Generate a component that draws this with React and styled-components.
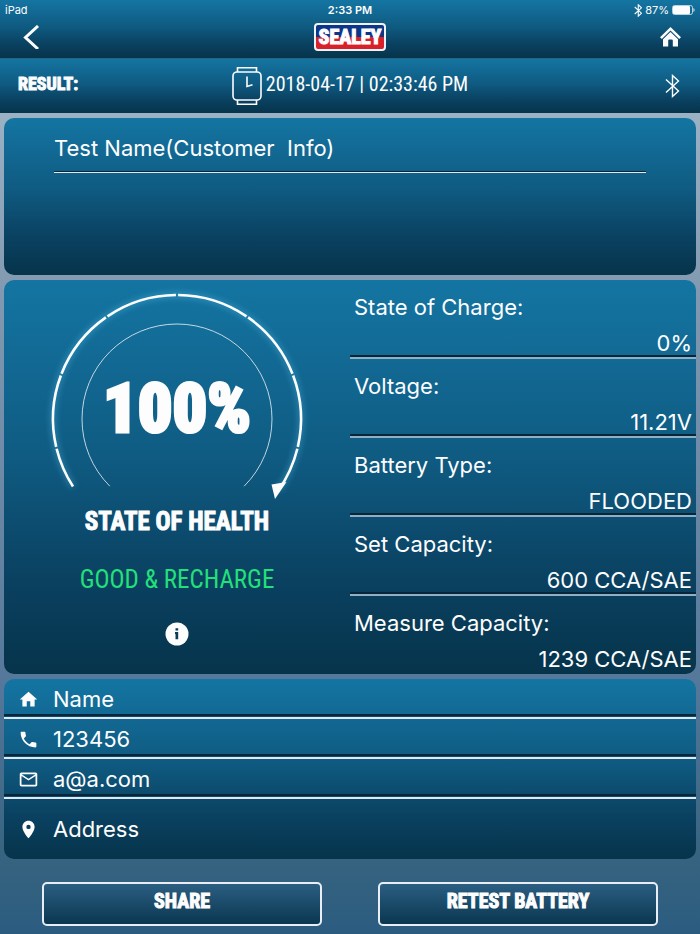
import styled, { createGlobalStyle } from 'styled-components'
import { MdHome, MdPhone, MdMailOutline, MdPlace } from 'react-icons/md'

const GlobalStyle = createGlobalStyle`
  * {
    box-sizing: border-box;
  }

  :root {
    --color-white: #fdfdfe;
    --color-dark-line: #08263a;
    --color-good: #22e07a;
    --panel-gradient: linear-gradient(#1475a2, #0f5b82 45%, #0a4161 76%, #06344b);
    --font-body: Inter, 'Liberation Sans', sans-serif;
    --font-condensed: 'Liberation Sans Narrow', 'Roboto Condensed', 'Open Sans Condensed', 'Liberation Sans', sans-serif;
  }

  body {
    margin: 0;
    color: var(--color-white);
    font-family: var(--font-body);
  }
`

const Page = styled.div`
  display: flex;
  flex-direction: column;
  min-height: 100vh;
  background: linear-gradient(#9bb1c4 12%, #8199b0 32%, #54779a 74%, #36637f 92%, #2b5c80);
`

const Header = styled.header`
  background: var(--panel-gradient);
  border-bottom: 1px solid #2a6580;
`

const StatusBar = styled.div`
  display: grid;
  grid-template-columns: 1fr auto 1fr;
  align-items: center;
  height: 20px;
  padding: 0 5px;
  font-size: 11px;
`

const Clock = styled.span`
  font-weight: 600;
`

const Battery = styled.span`
  display: flex;
  align-items: center;
  justify-content: flex-end;
  gap: 3px;
`

const NavBar = styled.nav`
  display: grid;
  grid-template-columns: 1fr auto 1fr;
  align-items: center;
  height: 38px;
  padding: 0 19px 4px;
`

const IconButton = styled.button`
  display: flex;
  justify-self: ${({ $end }) => ($end ? 'end' : 'start')};
  padding: 0;
  border: none;
  background: none;
  color: inherit;
  cursor: pointer;
`

const Logo = styled.div`
  padding: 0 2px;
  border: 2px solid #f1f3f8;
  border-radius: 4px;
  background: linear-gradient(#0c3688 50%, #d8222a 50%);
  font-family: var(--font-condensed);
  font-size: 20px;
  font-weight: 800;
  line-height: 24px;
  -webkit-text-stroke: 1px currentColor;
`

const ResultBar = styled.section`
  display: grid;
  grid-template-columns: 1fr auto 1fr;
  align-items: center;
  height: 54px;
  padding: 0 18px;
  background: var(--panel-gradient);
`

const ResultTitle = styled.h1`
  margin: 0;
  padding-bottom: 4px;
  font-family: var(--font-condensed);
  font-size: 18px;
  font-weight: 700;
  line-height: 24px;
  -webkit-text-stroke: 1px currentColor;
`

const Timestamp = styled.div`
  display: flex;
  align-items: center;
  gap: 4px;
  font-family: var(--font-condensed);
  font-size: 20px;
  line-height: 24px;

  time {
    padding-bottom: 4px;
  }
`

const BluetoothState = styled.span`
  display: flex;
  justify-self: end;
`

const Main = styled.main`
  display: flex;
  flex-direction: column;
  gap: 5px;
  padding: 5px 4px 0;
`

const Panel = styled.section`
  overflow: hidden;
  border-radius: 10px;
  background: var(--panel-gradient);
`

const TestPanel = styled(Panel)`
  min-height: 157px;
  padding: 8px 50px;
`

const TestInput = styled.input`
  display: block;
  width: 100%;
  height: 47px;
  padding: 0 0 2px;
  border: none;
  border-bottom: 1px solid #e4e9f0;
  outline: none;
  background: none;
  box-shadow: inset 0 -1px var(--color-dark-line);
  color: inherit;
  font-family: inherit;
  font-size: 22px;
`

const HealthPanel = styled(Panel)`
  display: grid;
  grid-template-columns: 1fr 1fr;
`

const Health = styled.div`
  display: flex;
  flex-direction: column;
  align-items: center;
  font-family: var(--font-condensed);
  line-height: 32px;
`

const Gauge = styled.div`
  display: grid;
  place-items: center;

  > * {
    grid-area: 1 / 1;
  }
`

const GaugeValue = styled.strong`
  padding-top: 32px;
  font-size: 68px;
  font-weight: 900;
  line-height: 72px;
  -webkit-text-stroke: 3px currentColor;
`

const HealthTitle = styled.h2`
  margin: 0;
  font-size: 25px;
  font-weight: 700;
  -webkit-text-stroke: 1px currentColor;
`

const HealthState = styled.p`
  margin: 26px 0;
  color: var(--color-good);
  font-size: 25px;
`

const Readings = styled.dl`
  margin: 0;
  font-size: 22px;
  line-height: 32px;
`

const Reading = styled.div`
  height: 79px;
  padding: 11px 4px 0;
  border-bottom: 2px solid #8fb0c4;
  box-shadow: inset 0 -2px var(--color-dark-line);

  &:last-child {
    height: 78px;
    border: none;
    box-shadow: none;
  }

  dd {
    margin: 4px 0 0;
    text-align: right;
  }
`

const ContactList = styled.ul`
  margin: 0;
  padding: 0;
  list-style: none;
  font-size: 22px;
`

const ContactItem = styled.li`
  display: flex;
  align-items: center;
  gap: 14px;
  height: 40px;
  padding: 2px 14px 0;
  border-bottom: 2px solid #e2e8ef;
  box-shadow: inset 0 -1px #0f4b6b, inset 0 -3px var(--color-dark-line);

  &:last-child {
    height: 60px;
    padding: 0 14px;
    border: none;
    box-shadow: none;
  }
`

const Actions = styled.footer`
  display: grid;
  grid-template-columns: 1fr 1fr;
  gap: 56px;
  padding: 23px 42px 8px;
`

const ActionButton = styled.button`
  height: 44px;
  padding: 0 0 6px;
  border: 2px solid #e8eef3;
  border-radius: 5px;
  background: linear-gradient(#2b5e82, #0a3750);
  color: inherit;
  font-family: var(--font-condensed);
  font-size: 20px;
  font-weight: 700;
  -webkit-text-stroke: 1px currentColor;
  cursor: pointer;
`

const readings = [
  { label: 'State of Charge:', value: '0%' },
  { label: 'Voltage:', value: '11.21V' },
  { label: 'Battery Type:', value: 'FLOODED' },
  { label: 'Set Capacity:', value: '600 CCA/SAE' },
  { label: 'Measure Capacity:', value: '1239 CCA/SAE' },
]

const contacts = [
  { icon: MdHome, text: 'Name' },
  { icon: MdPhone, text: '123456' },
  { icon: MdMailOutline, text: 'a@a.com' },
  { icon: MdPlace, text: 'Address' },
]

function BluetoothIcon({ width, height, stroke = 1.4 }) {
  return (
    <svg width={width} height={height} viewBox="0 0 14 24" fill="none" stroke="currentColor" strokeWidth={stroke}>
      <path d="M1 5.500 13.500 17 7.500 22.500V1.500L13.500 7 1 18.500" />
    </svg>
  )
}

function BatteryIcon() {
  return (
    <svg width="23" height="10" viewBox="0 0 23 10">
      <rect x="0.5" y="0.5" width="20" height="9" rx="2" fill="none" stroke="currentColor" strokeOpacity="0.7" />
      <rect x="1" y="1" width="17" height="8" rx="1" fill="currentColor" />
      <path d="M21.5 3v4q1-.6 1-2t-1-2" fill="currentColor" />
    </svg>
  )
}

function BackIcon() {
  return (
    <svg width="22" height="24" viewBox="0 0 22 24" fill="none" stroke="currentColor" strokeWidth="3">
      <path d="M19 1 6.500 12.500 19 24" />
    </svg>
  )
}

function HomeIcon() {
  return (
    <svg width="21" height="20" viewBox="0 0 21 20" fill="currentColor">
      <path d="M10.500 0 0 10.200l1.800 1.700 8.700-8.400 8.700 8.400 1.800-1.700z" />
      <path d="M10.500 4.900 3 12.200V19.500h5.200V13.500q0-1 1-1h2.600q1 0 1 1v6H18v-7.300z" />
    </svg>
  )
}

function WatchIcon() {
  return (
    <svg width="30" height="38" viewBox="0 0 30 38" fill="none" stroke="currentColor" strokeWidth="1.600">
      <rect x="1" y="5" width="28" height="28" rx="4" />
      <path d="M5.500 5V.8h19V5M5.500 33v4.200h19V33M15 9.500v10l5.500-1.700" />
    </svg>
  )
}

function InfoIcon() {
  return (
    <svg width="24" height="24" viewBox="0 0 24 24">
      <circle cx="12" cy="12" r="11.500" fill="currentColor" />
      <path d="M10.500 6.300h2.700v2.200h-2.700zM10 10h3.200v7.300h-2.700V12H10z" fill="#0a3c59" />
    </svg>
  )
}

// Point on a circle round the dial's centre, with the angle taken clockwise from the top
const point = (radius, angle) => {
  const rad = (angle * Math.PI) / 180
  return `${(150 + radius * Math.sin(rad)).toFixed(2)} ${(139 - radius * Math.cos(rad)).toFixed(2)}`
}

const arc = (radius, from, to) =>
  `M${point(radius, from)}A${radius} ${radius} 0 ${to - from > 180 ? 1 : 0} 1 ${point(radius, to)}`

const segments = [
  [-123, -103.9],
  [-103, -69.5],
  [-68.6, -35],
  [-34.1, -0.5],
  [0.5, 34.1],
  [35, 68.6],
  [69.5, 103],
  [103.9, 125],
]

function Dial() {
  return (
    <svg width="300" height="226" viewBox="0 0 300 226" fill="none" stroke="currentColor">
      <defs>
        <filter id="glow" x="-10%" y="-10%" width="120%" height="120%">
          <feGaussianBlur stdDeviation="3" />
        </filter>
      </defs>
      <path d={arc(124, -123, 125)} stroke="#5cc4f0" strokeWidth="5" opacity="0.4" filter="url(#glow)" />
      {segments.map(([from, to]) => (
        <path key={from} d={arc(124, from, to)} strokeWidth="2.600" />
      ))}
      <path d={arc(95, -135, 135)} strokeWidth="1" opacity="0.75" />
      <path d="M244.500 204.500 259.500 202 248 219z" fill="currentColor" stroke="none" />
    </svg>
  )
}

function App() {
  return (
    <Page>
      <GlobalStyle />
      <Header>
        <StatusBar>
          <span>iPad</span>
          <Clock>2:33 PM</Clock>
          <Battery>
            <BluetoothIcon width={8} height={13} stroke={2} />
            87%
            <BatteryIcon />
          </Battery>
        </StatusBar>
        <NavBar>
          <IconButton type="button" aria-label="Back">
            <BackIcon />
          </IconButton>
          <Logo>SEALEY</Logo>
          <IconButton type="button" aria-label="Home" $end>
            <HomeIcon />
          </IconButton>
        </NavBar>
      </Header>

      <ResultBar>
        <ResultTitle>RESULT:</ResultTitle>
        <Timestamp>
          <WatchIcon />
          <time dateTime="2018-04-17T14:33:46">2018-04-17 | 02:33:46 PM</time>
        </Timestamp>
        <BluetoothState>
          <BluetoothIcon width={20} height={24} />
        </BluetoothState>
      </ResultBar>

      <Main>
        <TestPanel>
          <TestInput type="text" aria-label="Test name" defaultValue="Test Name(Customer  Info)" />
        </TestPanel>

        <HealthPanel>
          <Health>
            <Gauge>
              <Dial />
              <GaugeValue>100%</GaugeValue>
            </Gauge>
            <HealthTitle>STATE OF HEALTH</HealthTitle>
            <HealthState>GOOD &amp; RECHARGE</HealthState>
            <IconButton type="button" aria-label="Information">
              <InfoIcon />
            </IconButton>
          </Health>
          <Readings>
            {readings.map(({ label, value }) => (
              <Reading key={label}>
                <dt>{label}</dt>
                <dd>{value}</dd>
              </Reading>
            ))}
          </Readings>
        </HealthPanel>

        <Panel>
          <ContactList>
            {contacts.map(({ icon: Icon, text }) => (
              <ContactItem key={text}>
                <Icon size={21} />
                {text}
              </ContactItem>
            ))}
          </ContactList>
        </Panel>
      </Main>

      <Actions>
        <ActionButton type="button">SHARE</ActionButton>
        <ActionButton type="button">RETEST BATTERY</ActionButton>
      </Actions>
    </Page>
  )
}

export default App
